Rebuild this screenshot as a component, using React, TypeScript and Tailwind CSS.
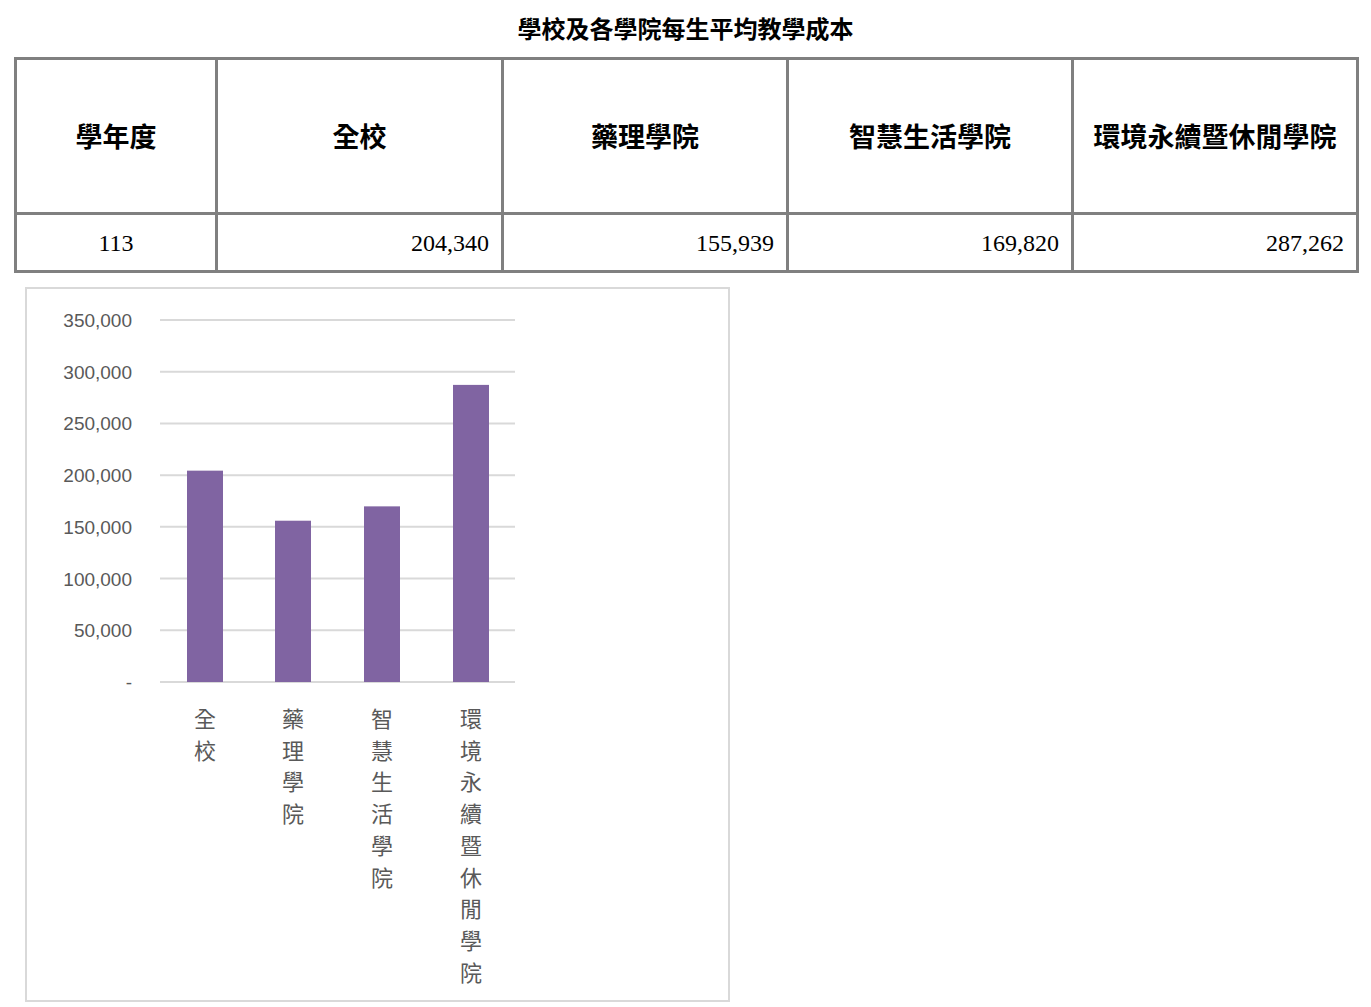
import React from 'react';

const cols = [
  { name: '全校', value: 204340 },
  { name: '藥理學院', value: 155939 },
  { name: '智慧生活學院', value: 169820 },
  { name: '環境永續暨休閒學院', value: 287262 },
];

const fmt = (n: number) => n.toLocaleString('en-US');

const font = { fontFamily: '"Noto Sans CJK TC", "Noto Sans", sans-serif' };

function Chart() {
  const y0 = 677 - 284;
  const per = (677 - 315) / 350000;
  const ticks = [0, 50000, 100000, 150000, 200000, 250000, 300000, 350000];
  const centers = [203, 291, 380, 469].map((c) => c - 25);
  return (
    <svg width="701" height="711" className="block" style={font}>
      {ticks.map((t) => {
        const y = y0 - t * per;
        return (
          <g key={t}>
            <line x1={133} x2={488} y1={y} y2={y} stroke="#d9d9d9" strokeWidth={2} />
            <text x={105} y={y + 7} textAnchor="end" fontSize={19} fill="#595959" fontFamily='"Liberation Sans", sans-serif'>
              {t === 0 ? '-' : fmt(t)}
            </text>
          </g>
        );
      })}
      {cols.map((c, i) => {
        const h = c.value * per;
        return <rect key={c.name} x={centers[i] - 18} y={y0 - h} width={36} height={h} fill="#8064a2" />;
      })}
      {cols.map((c, i) =>
        c.name.split('').map((ch, j) => (
          <text key={c.name + j} x={centers[i]} y={y0 + 45 + j * 31.7} textAnchor="middle" fontSize={22} fill="#595959">
            {ch}
          </text>
        ))
      )}
    </svg>
  );
}

export default function App() {
  return (
    <div className="bg-white w-[1371px] min-h-[1007px]" style={font}>
      <div className="pt-[12px] h-[57px] text-center text-[24px] font-bold leading-[32px] text-black">
        學校及各學院每生平均教學成本
      </div>
      <table className="ml-[14px] border-collapse border-[3px] border-[#808080]">
        <tbody>
          <tr className="h-[155px]">
            {['學年度', ...cols.map((c) => c.name)].map((h, i) => (
              <th
                key={h}
                className={`border-[3px] border-[#808080] text-[27px] font-bold text-black text-center p-0 ${i === 0 ? 'w-[201px]' : i === 1 ? 'w-[286px]' : 'w-[285px]'}`}
              >
                {h}
              </th>
            ))}
          </tr>
          <tr className="h-[58px]">
            <td className="border-[3px] border-[#808080] text-center text-[24px] text-black" style={{ fontFamily: '"Liberation Serif", serif' }}>
              113
            </td>
            {cols.map((c) => (
              <td
                key={c.name}
                className="border-[3px] border-[#808080] text-right pr-[12px] text-[24px] text-black"
                style={{ fontFamily: '"Liberation Serif", serif' }}
              >
                {fmt(c.value)}
              </td>
            ))}
          </tr>
        </tbody>
      </table>
      <div className="mt-[14px] ml-[25px] w-[705px] h-[715px] border-[2px] border-[#d9d9d9]">
        <Chart />
      </div>
    </div>
  );
}
